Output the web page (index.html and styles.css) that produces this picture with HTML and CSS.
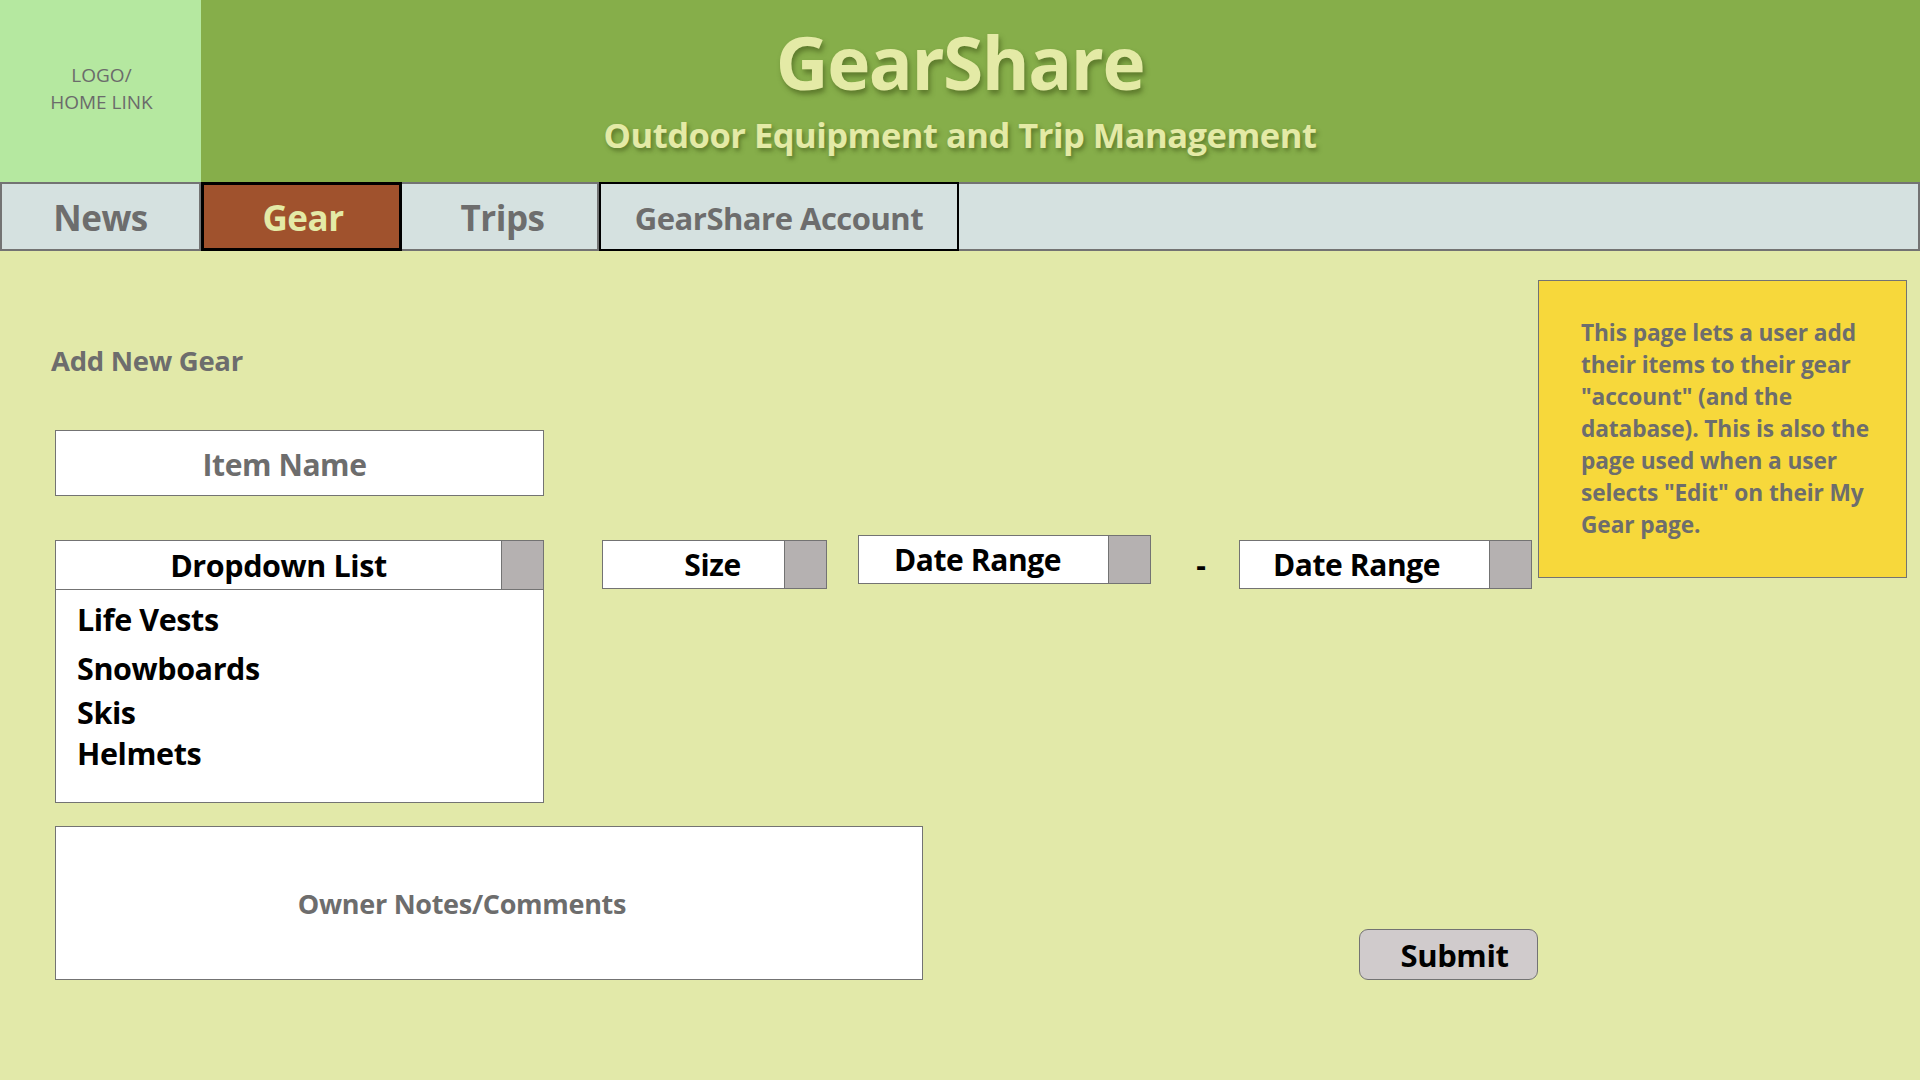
FILE: index.html
```html
<!DOCTYPE html>
<html lang="en">
<head>
<meta charset="utf-8">
<title>GearShare - Add New Gear</title>
<link rel="stylesheet" href="styles.css">
</head>
<body>
<header class="header">
  <a class="logo" href="#">LOGO/<br>HOME LINK</a>
  <div class="brand">
    <h1 class="brand-title">GearShare</h1>
    <p class="brand-sub">Outdoor Equipment and Trip Management</p>
  </div>
</header>
<nav class="nav">
  <a class="tab tab-news" href="#">News</a>
  <a class="tab tab-gear active" href="#">Gear</a>
  <a class="tab tab-trips" href="#">Trips</a>
  <a class="tab tab-account" href="#">GearShare Account</a>
  <div class="tab-fill"></div>
</nav>
<main class="main">
  <section class="form">
    <h2 class="form-title">Add New Gear</h2>
    <div class="field item-name">Item Name</div>
    <div class="select-row">
      <div class="dropdown">
        <div class="select select-wide">
          <span class="select-label">Dropdown List</span>
          <span class="select-btn"></span>
        </div>
        <ul class="options">
          <li class="opt-1">Life Vests</li>
          <li class="opt-2">Snowboards</li>
          <li class="opt-3">Skis</li>
          <li class="opt-4">Helmets</li>
        </ul>
      </div>
      <div class="select select-size">
        <span class="select-label">Size</span>
        <span class="select-btn"></span>
      </div>
      <div class="select select-date select-date-1">
        <span class="select-label">Date Range</span>
        <span class="select-btn"></span>
      </div>
      <span class="dash">-</span>
      <div class="select select-date select-date-2">
        <span class="select-label">Date Range</span>
        <span class="select-btn"></span>
      </div>
    </div>
    <div class="bottom-row">
      <div class="notes">Owner Notes/Comments</div>
      <button class="submit" type="button">Submit</button>
    </div>
  </section>
  <aside class="note">
    This page lets a user add their items to their gear "account" (and the database). This is also the page used when a user selects "Edit" on their My Gear page.
  </aside>
</main>
</body>
</html>
```
FILE: styles.css
```css
* { box-sizing: border-box; }
html, body { margin: 0; padding: 0; }
body {
  width: 1920px;
  height: 1080px;
  overflow: hidden;
  background: #e2e9a9;
  font-family: "Open Sans", "Noto Sans", "Liberation Sans", sans-serif;
}

.header {
  display: flex;
  height: 182px;
  background: #86ae4a;
}
.logo {
  width: 201px;
  background: #b5e8a0;
  display: flex;
  align-items: center;
  justify-content: center;
  text-align: center;
  color: #6b6b6b;
  font-size: 19px;
  line-height: 27px;
  text-decoration: none;
  padding-bottom: 4px;
  padding-left: 2px;
}
.brand {
  flex: 1;
  display: flex;
  flex-direction: column;
  align-items: center;
  padding-right: 201px;
}
.brand-title {
  margin: 17px 0 0;
  font-size: 73px;
  line-height: 90px;
  font-weight: 700;
  color: #e4eaa6;
  letter-spacing: -1.5px;
  text-shadow: 2px 4px 5px rgba(60, 80, 20, 0.55);
}
.brand-sub {
  margin: 6px 0 0;
  font-size: 34.5px;
  line-height: 44px;
  font-weight: 700;
  color: #e4eaa6;
  letter-spacing: -0.5px;
  text-shadow: 2px 3px 4px rgba(60, 80, 20, 0.55);
}

.nav {
  display: flex;
  height: 69px;
  background: #d5e1e0;
}
.tab {
  display: flex;
  align-items: center;
  justify-content: center;
  height: 69px;
  padding-top: 2px;
  border: 2px solid #737373;
  border-left-width: 0;
  color: #6d6d6d;
  font-weight: 700;
  font-size: 35px;
  text-decoration: none;
  letter-spacing: -0.5px;
}
.tab-news { width: 201px; border-left-width: 2px; font-size: 35px; }
.tab-gear {
  width: 201px;
  background: #a0522d;
  color: #e4eaa6;
  border: 3px solid #000;
  padding-left: 3px;
}
.tab-trips { width: 197px; border-left-width: 0; padding-left: 6px; }
.tab-account {
  width: 360px;
  border: 2px solid #000;
  font-size: 31px;
}
.tab-fill {
  flex: 1;
  border: 2px solid #737373;
  border-left-width: 0;
}

.main {
  display: flex;
  align-items: flex-start;
}
.form {
  width: 1538px;
  padding-left: 55px;
  padding-top: 80px;
}
.form-title {
  margin: 0;
  font-size: 27.5px;
  line-height: 60px;
  font-weight: 700;
  color: #6d6d6d;
  margin-left: -4px;
  letter-spacing: -0.3px;
}
.field {
  background: #fff;
  border: 1.5px solid #737373;
}
.item-name {
  width: 489px;
  height: 66px;
  margin-top: 39px;
  display: flex;
  align-items: center;
  justify-content: center;
  padding-right: 30px;
  padding-top: 3px;
  color: #6d6d6d;
  font-weight: 700;
  font-size: 30px;
  letter-spacing: -0.4px;
}

.select-row {
  display: flex;
  align-items: flex-start;
  margin-top: 44px;
}
.select {
  display: flex;
  height: 49px;
  background: #fff;
  border: 1.5px solid #737373;
}
.select-label {
  flex: 1;
  display: flex;
  align-items: center;
  justify-content: center;
  color: #000;
  font-weight: 700;
  font-size: 30px;
  letter-spacing: -0.4px;
}
.select-btn {
  width: 42px;
  background: #b5b1b1;
  border-left: 1.5px solid #737373;
}
.dropdown {
  width: 489px;
  height: 263px;
  background: #fff;
  border: 1.5px solid #737373;
}
.select-wide {
  border: 0;
  border-bottom: 1.5px solid #737373;
  height: 49px;
}
.select-wide .select-label { font-size: 30.5px; }
.options {
  list-style: none;
  margin: 0;
  padding: 8px 0 0 21px;
  color: #000;
  font-weight: 700;
  font-size: 30.5px;
  letter-spacing: -0.4px;
}
.options li { line-height: 42px; }
.opt-2 { margin-top: 7px; }
.opt-3 { margin-top: 2px; }
.opt-4 { margin-top: -1px; }

.select-size { width: 225px; margin-left: 58px; }
.select-size .select-label { padding-left: 38px; }
.select-date { width: 293px; }
.select-date-1 { margin-left: 31px; margin-top: -5px; }
.select-date-1 .select-label { padding-right: 12px; }
.select-date-2 .select-label { padding-right: 16px; }
.dash {
  width: 88px;
  padding-left: 12px;
  text-align: center;
  font-size: 30px;
  font-weight: 700;
  line-height: 49px;
  color: #000;
}

.bottom-row {
  display: flex;
  align-items: flex-end;
  margin-top: 23px;
}
.notes {
  width: 868px;
  height: 154px;
  background: #fff;
  border: 1.5px solid #737373;
  display: flex;
  align-items: center;
  justify-content: center;
  padding-right: 54px;
  color: #6d6d6d;
  font-weight: 700;
  font-size: 27px;
  letter-spacing: -0.3px;
}
.submit {
  margin-left: auto;
  width: 179px;
  height: 51px;
  background: #d0cbcc;
  border: 1.5px solid #737373;
  border-radius: 9px;
  font-family: inherit;
  font-weight: 700;
  font-size: 31px;
  color: #000;
  padding: 0 0 0 12px;
  letter-spacing: -0.4px;
}

.note {
  width: 369px;
  height: 298px;
  margin-top: 29px;
  background: #f7d83b;
  border: 1.5px solid #737373;
  padding: 36px 14px 0 42px;
  color: #6d6d6d;
  font-weight: 700;
  font-size: 22.7px;
  line-height: 32px;
  letter-spacing: -0.1px;
}
```
